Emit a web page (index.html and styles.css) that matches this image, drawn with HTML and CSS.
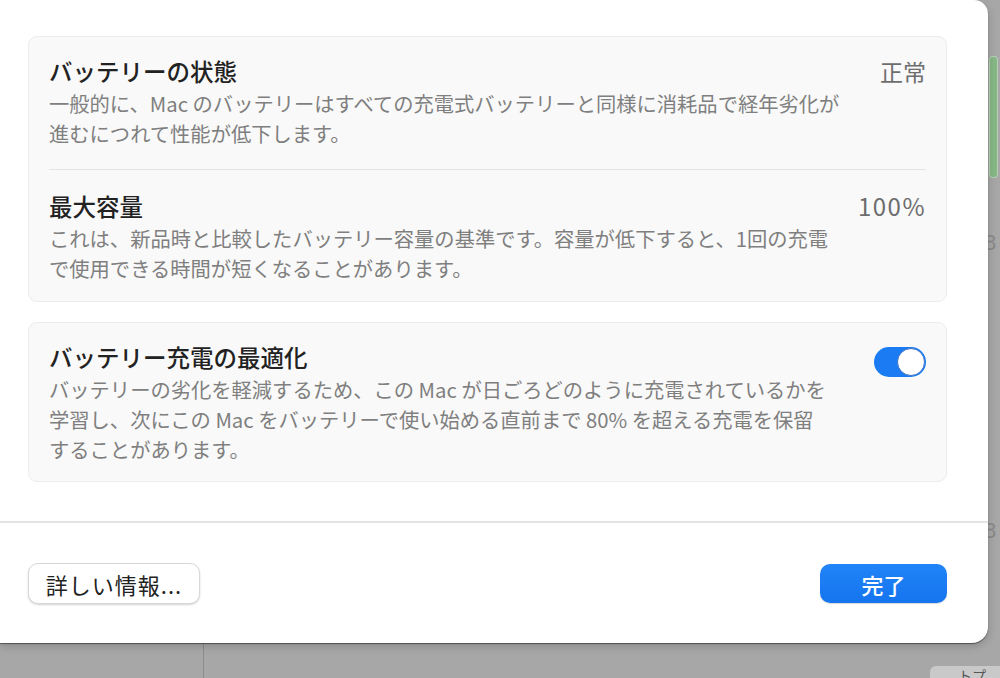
FILE: index.html
```html
<!doctype html>
<html lang="ja"><head>
<meta charset="utf-8">
<title>バッテリーの状態</title>
<link rel="stylesheet" href="styles.css">
</head>
<body>

<div class="desk">
	<div class="desk-bar"></div>
	<span class="desk-digit d1">8</span>
	<span class="desk-digit d2">8</span>
	<div class="desk-split"></div>
	<div class="desk-tag">トプ</div>
</div>

<div class="sheet">
	<div class="main">
		<div class="card">
			<div class="row">
				<div class="info">
					<div class="title">バッテリーの状態</div>
					<div class="desc">一般的に、Mac のバッテリーはすべての充電式バッテリーと同様に消耗品で経年劣化が<br>進むにつれて性能が低下します。</div>
				</div>
				<div class="value">正常</div>
			</div>
			<div class="row">
				<div class="info">
					<div class="title">最大容量</div>
					<div class="desc">これは、新品時と比較したバッテリー容量の基準です。容量が低下すると、1回の充電<br>で使用できる時間が短くなることがあります。</div>
				</div>
				<div class="value num">100%</div>
			</div>
		</div>

		<div class="card">
			<div class="row">
				<div class="info">
					<div class="title">バッテリー充電の最適化</div>
					<div class="desc">バッテリーの劣化を軽減するため、この Mac が日ごろどのように充電されているかを<br>学習し、次にこの Mac をバッテリーで使い始める直前まで 80% を超える充電を保留<br>することがあります。</div>
				</div>
				<div class="toggle on"><span class="knob"></span></div>
			</div>
		</div>
	</div>

	<div class="footer">
		<button class="btn">詳しい情報...</button>
		<button class="btn primary">完了</button>
	</div>
</div>

</body></html>
```

FILE: styles.css
```css
html, body {
	margin: 0;
	height: 100%;
}
body {
	width: 1000px;
	height: 678px;
	overflow: hidden;
	position: relative;
	background: #a7a7a7;
	font-family: "Noto Sans CJK JP", "Noto Sans", sans-serif;
}

/* desktop behind the sheet */
.desk-bar {
	position: absolute;
	left: 990px;
	top: 57px;
	width: 7px;
	height: 120px;
	background: #86b886;
	border-radius: 3px;
	box-shadow: 0 0 0 1px #b6cfb6;
}
.desk-digit {
	position: absolute;
	left: 984px;
	font-family: "Liberation Sans", sans-serif;
	font-size: 22px;
	color: #8a8a8a;
}
.d1 { top: 230px; }
.d2 { top: 518px; }
.desk-split {
	position: absolute;
	left: 203px;
	top: 640px;
	width: 1px;
	height: 40px;
	background: #8c8c8c;
}
.desk-tag {
	position: absolute;
	left: 930px;
	top: 666px;
	width: 80px;
	height: 20px;
	background: #c9c9c9;
	border-radius: 6px;
	font-size: 14px;
	line-height: 18px;
	padding-left: 28px;
	color: #555;
}

.sheet {
	position: relative;
	width: 988px;
	height: 643px;
	background: #fff;
	border-radius: 0 14px 16px 0;
	box-shadow: 0 1px 1px rgba(0, 0, 0, .45), 0 3px 10px rgba(0, 0, 0, .18);
	display: flex;
	flex-direction: column;
}
.main {
	flex: 1;
	padding: 36px 41px 0 28px;
	display: flex;
	flex-direction: column;
	gap: 20px;
}

.card {
	background: #f9f9f9;
	border: 1px solid #ececec;
	border-radius: 9px;
	padding: 0 20px;
}
.row {
	display: flex;
	justify-content: space-between;
	align-items: flex-start;
	padding: 18px 0 17px 0;
}
.card:first-child .row:first-child {
	padding-bottom: 21px;
}
.row + .row {
	border-top: 1px solid #e4e4e4;
	padding-top: 20px;
	padding-bottom: 18px;
}
.title {
	font-size: 23.5px;
	font-weight: 500;
	line-height: 32px;
	color: #222;
}
.desc {
	font-size: 20.3px;
	line-height: 30px;
	margin-top: 1px;
	color: #7f7f7f;
}
.value {
	font-size: 23px;
	line-height: 32px;
	color: #6d6d6d;
}
.value.num {
	font-size: 24px;
	letter-spacing: 1.5px;
}

.toggle {
	width: 52px;
	height: 30px;
	border-radius: 15px;
	background: #d9d9d9;
	margin-top: 6px;
	position: relative;
}
.toggle.on { background: #1a7bf3; }
.knob {
	position: absolute;
	right: 1px;
	top: 1px;
	width: 26px;
	height: 26px;
	border-radius: 50%;
	background: #fff;
	border: 1px solid #3f74c8;
}

.footer {
	border-top: 2px solid #e4e4e4;
	padding: 40px 41px 39px 28px;
	display: flex;
	justify-content: space-between;
	align-items: center;
}
.btn {
	font-family: "Noto Sans CJK JP", "Noto Sans", sans-serif;
	font-size: 22px;
	letter-spacing: 1px;
	width: 172px;
	height: 41px;
	padding: 0;
	background: #fff;
	color: #222;
	border: 1px solid #d8d8d8;
	border-radius: 10px;
	box-shadow: 0 1px 2px rgba(0, 0, 0, .18);
}
.btn.primary {
	width: 127px;
	height: 39px;
	color: #fff;
	font-weight: 500;
	letter-spacing: 0;
	border: none;
	background: linear-gradient(#2184f7, #1574ef);
	box-shadow: 0 1px 1px rgba(0, 0, 0, .15);
}
```
